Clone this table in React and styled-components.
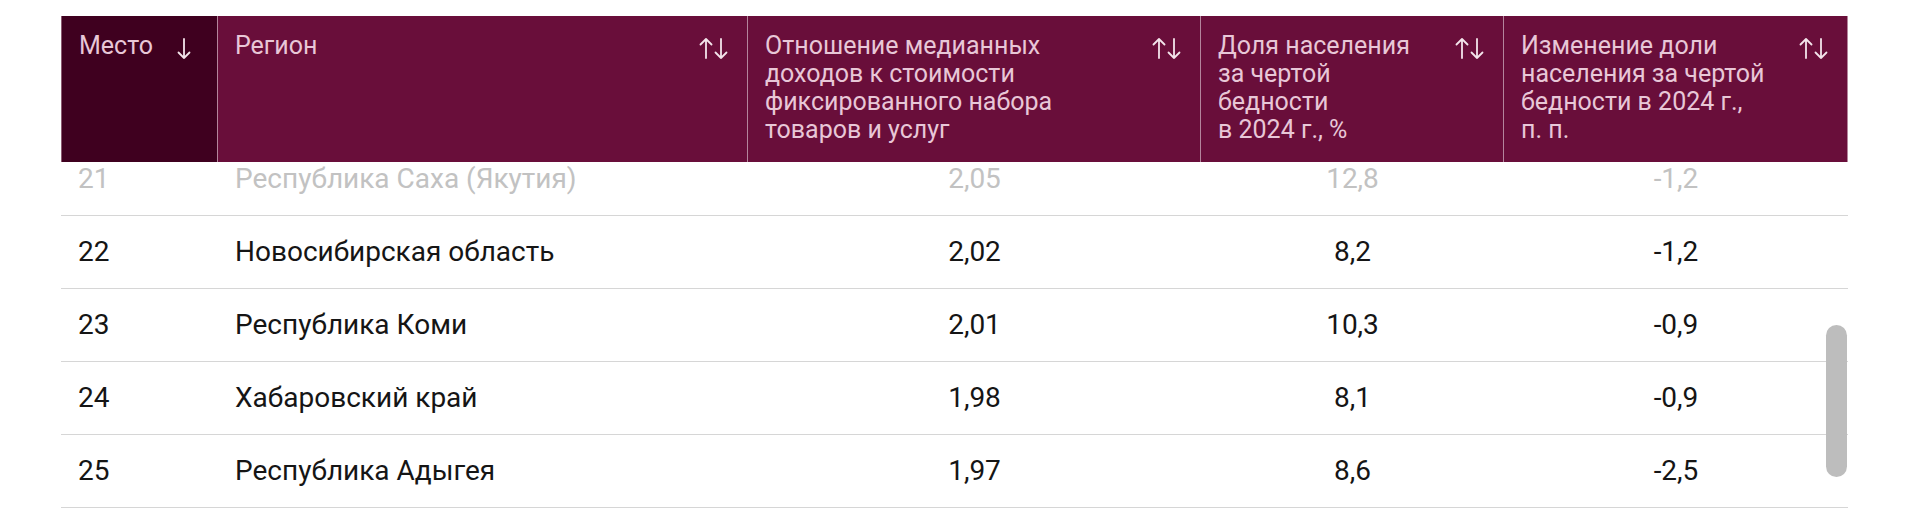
import { useLayoutEffect, useRef } from 'react';
import styled, { createGlobalStyle } from 'styled-components';

const columns = [
  { key: 'place', title: ['Место'], sort: 'down', width: 157, align: 'left' },
  { key: 'region', title: ['Регион'], sort: 'both', width: 530, align: 'left' },
  {
    key: 'ratio',
    title: ['Отношение медианных', 'доходов к стоимости', 'фиксированного набора', 'товаров и услуг'],
    sort: 'both',
    width: 453,
    align: 'center',
  },
  {
    key: 'share',
    title: ['Доля населения', 'за чертой', 'бедности', 'в 2024 г., %'],
    sort: 'both',
    width: 303,
    align: 'center',
  },
  {
    key: 'change',
    title: ['Изменение доли', 'населения за чертой', 'бедности в 2024 г.,', 'п.\u00a0п.'],
    sort: 'both',
    width: 344,
    align: 'center',
  },
];

const rows = [
  { place: 21, region: 'Республика Саха (Якутия)', ratio: '2,05', share: '12,8', change: '-1,2' },
  { place: 22, region: 'Новосибирская область', ratio: '2,02', share: '8,2', change: '-1,2' },
  { place: 23, region: 'Республика Коми', ratio: '2,01', share: '10,3', change: '-0,9' },
  { place: 24, region: 'Хабаровский край', ratio: '1,98', share: '8,1', change: '-0,9' },
  { place: 25, region: 'Республика Адыгея', ratio: '1,97', share: '8,6', change: '-2,5' },
];

function SortIcon({ mode }) {
  return (
    <IconBox viewBox="0 0 30 22" aria-hidden="true">
      {mode === 'down' ? (
        <path d="M15 1v19M9.5 14.5L15 20l5.5-5.5" />
      ) : (
        <>
          <path d="M8 20V1M2.5 6.5L8 1l5.5 5.5" />
          <path d="M23 1v19M17.5 14.5L23 20l5.5-5.5" />
        </>
      )}
    </IconBox>
  );
}

export default function App() {
  const scrollRef = useRef(null);

  // the table is shown scrolled a little, row 21 tucked under the sticky header
  useLayoutEffect(() => {
    if (scrollRef.current) scrollRef.current.scrollTop = 19;
  }, []);

  return (
    <>
      <GlobalStyle />
      <Page>
        <Frame>
          <ScrollArea ref={scrollRef}>
            <Table>
              <colgroup>
                {columns.map((c) => (
                  <col key={c.key} style={{ width: c.width }} />
                ))}
              </colgroup>
              <thead>
                <tr>
                  {columns.map((c, i) => (
                    <HeadCell key={c.key} $active={i === 0}>
                      <HeadInner>
                        <HeadTitle>
                          {c.title.map((line) => (
                            <span key={line}>{line}</span>
                          ))}
                        </HeadTitle>
                        <SortIcon mode={c.sort} />
                      </HeadInner>
                    </HeadCell>
                  ))}
                </tr>
              </thead>
              <tbody>
                {rows.map((r, i) => (
                  <Row key={r.place} $faded={i === 0}>
                    {columns.map((c) => (
                      <Cell key={c.key} $align={c.align}>
                        {r[c.key]}
                      </Cell>
                    ))}
                  </Row>
                ))}
              </tbody>
            </Table>
          </ScrollArea>
          <Thumb />
        </Frame>
      </Page>
    </>
  );
}

const GlobalStyle = createGlobalStyle`
  html, body {
    margin: 0;
    background: #fff;
    font-family: Roboto, "Liberation Sans", sans-serif;
    overflow: hidden;
  }
`;

const Page = styled.div`
  padding: 16px 0 0 61px;
`;

const Frame = styled.div`
  position: relative;
  width: 1787px;
`;

const ScrollArea = styled.div`
  height: 495px;
  overflow-y: auto;
  scrollbar-width: none;
  &::-webkit-scrollbar {
    display: none;
  }
`;

const Table = styled.table`
  width: 1787px;
  table-layout: fixed;
  border-collapse: separate;
  border-spacing: 0;
  margin-bottom: 60px;
`;

const HeadCell = styled.th`
  position: sticky;
  top: 0;
  z-index: 1;
  height: 114px;
  padding: 16px 19px 16px 17px;
  background: ${(p) => (p.$active ? '#3f001f' : '#690e3a')};
  color: #e8c7d7;
  font-size: 25px;
  font-weight: 400;
  line-height: 28px;
  text-align: left;
  vertical-align: top;
  border-right: 1px solid #b4859c;

  &:first-child {
    border-left: 1px solid #8a5a70;
  }
`;

const HeadInner = styled.div`
  display: flex;
  justify-content: space-between;
  align-items: flex-start;
  gap: 16px;
`;

const HeadTitle = styled.div`
  display: flex;
  flex-direction: column;
  white-space: nowrap;
`;

const IconBox = styled.svg`
  flex: none;
  width: 30px;
  height: 22px;
  margin-top: 6px;
  fill: none;
  stroke: #f3e4eb;
  stroke-width: 1.8;
  stroke-linecap: round;
  stroke-linejoin: round;
`;

const Row = styled.tr`
  color: ${(p) => (p.$faded ? '#c2c2c2' : '#151515')};
`;

const Cell = styled.td`
  padding: 22px 18px 22px 17px;
  font-size: 28px;
  line-height: 28px;
  text-align: ${(p) => p.$align};
  border-bottom: 1px solid #d6d6d6;
  white-space: nowrap;

  &:nth-child(n + 3) {
    padding: 22px 0;
  }
`;

const Thumb = styled.div`
  position: absolute;
  top: 309px;
  right: 1px;
  width: 21px;
  height: 152px;
  border-radius: 11px;
  background: #bdbdbd;
`;
